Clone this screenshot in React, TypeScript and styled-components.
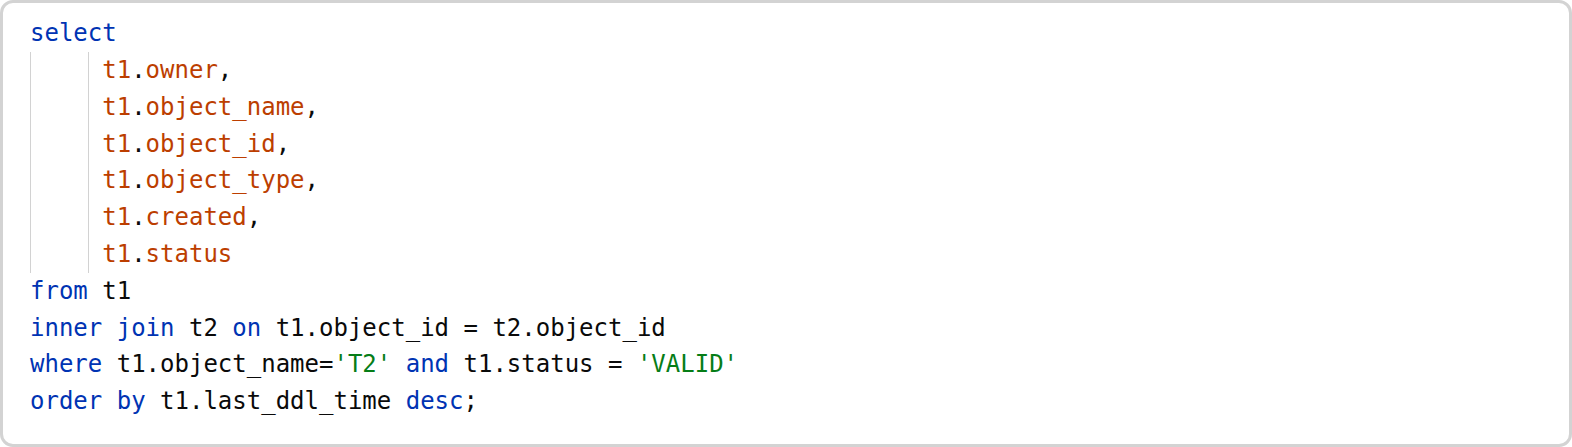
import React from "react";
import styled, { createGlobalStyle } from "styled-components";

const GlobalStyle = createGlobalStyle`
  html, body { margin: 0; padding: 0; background: #ffffff; }
  * { box-sizing: border-box; }
`;

const Frame = styled.div`
  width: 1572px;
  height: 447px;
  border: 3px solid #d3d3d3;
  border-radius: 13px;
  background: #ffffff;
  padding: 12.2px 27px 24px 27px;
`;

const Code = styled.pre`
  margin: 0;
  font-family: "DejaVu Sans Mono", Menlo, monospace;
  font-size: 24px;
  line-height: 36.8px;
  color: #0a0a0a;
`;

const Line = styled.div`
  display: block;
  height: 36.8px;
  white-space: pre;
`;

const Guide = styled.span<{ $cols: number }>`
  display: inline-block;
  vertical-align: top;
  width: ${(p) => p.$cols}ch;
  height: 36.8px;
  border-left: 1px solid #d2d2d2;
`;

type Kind = "kw" | "col" | "str" | "txt";

const Tok = styled.span<{ $k: Kind }>`
  color: ${(p) =>
    p.$k === "kw"
      ? "#0033b3"
      : p.$k === "col"
      ? "#bc3e00"
      : p.$k === "str"
      ? "#067d17"
      : "#0a0a0a"};
`;

const K = ({ children }: { children: React.ReactNode }) => <Tok $k="kw">{children}</Tok>;
const C = ({ children }: { children: React.ReactNode }) => <Tok $k="col">{children}</Tok>;
const S = ({ children }: { children: React.ReactNode }) => <Tok $k="str">{children}</Tok>;

const columns = ["owner", "object_name", "object_id", "object_type", "created", "status"];

export default function App() {
  return (
    <>
      <GlobalStyle />
      <Frame>
        <Code>
          <Line>
            <K>select</K>
          </Line>
          {columns.map((c, i) => (
            <Line key={c}>
              <Guide $cols={4} />
              <Guide $cols={1} />
              <C>t1</C>.<C>{c}</C>
              {i < columns.length - 1 ? "," : ""}
            </Line>
          ))}
          <Line>
            <K>from</K> t1
          </Line>
          <Line>
            <K>inner join</K> t2 <K>on</K> t1.object_id = t2.object_id
          </Line>
          <Line>
            <K>where</K> t1.object_name=<S>'T2'</S>{" "}<K>and</K> t1.status = <S>'VALID'</S>
          </Line>
          <Line>
            <K>order by</K> t1.last_ddl_time <K>desc</K>;
          </Line>
        </Code>
      </Frame>
    </>
  );
}
